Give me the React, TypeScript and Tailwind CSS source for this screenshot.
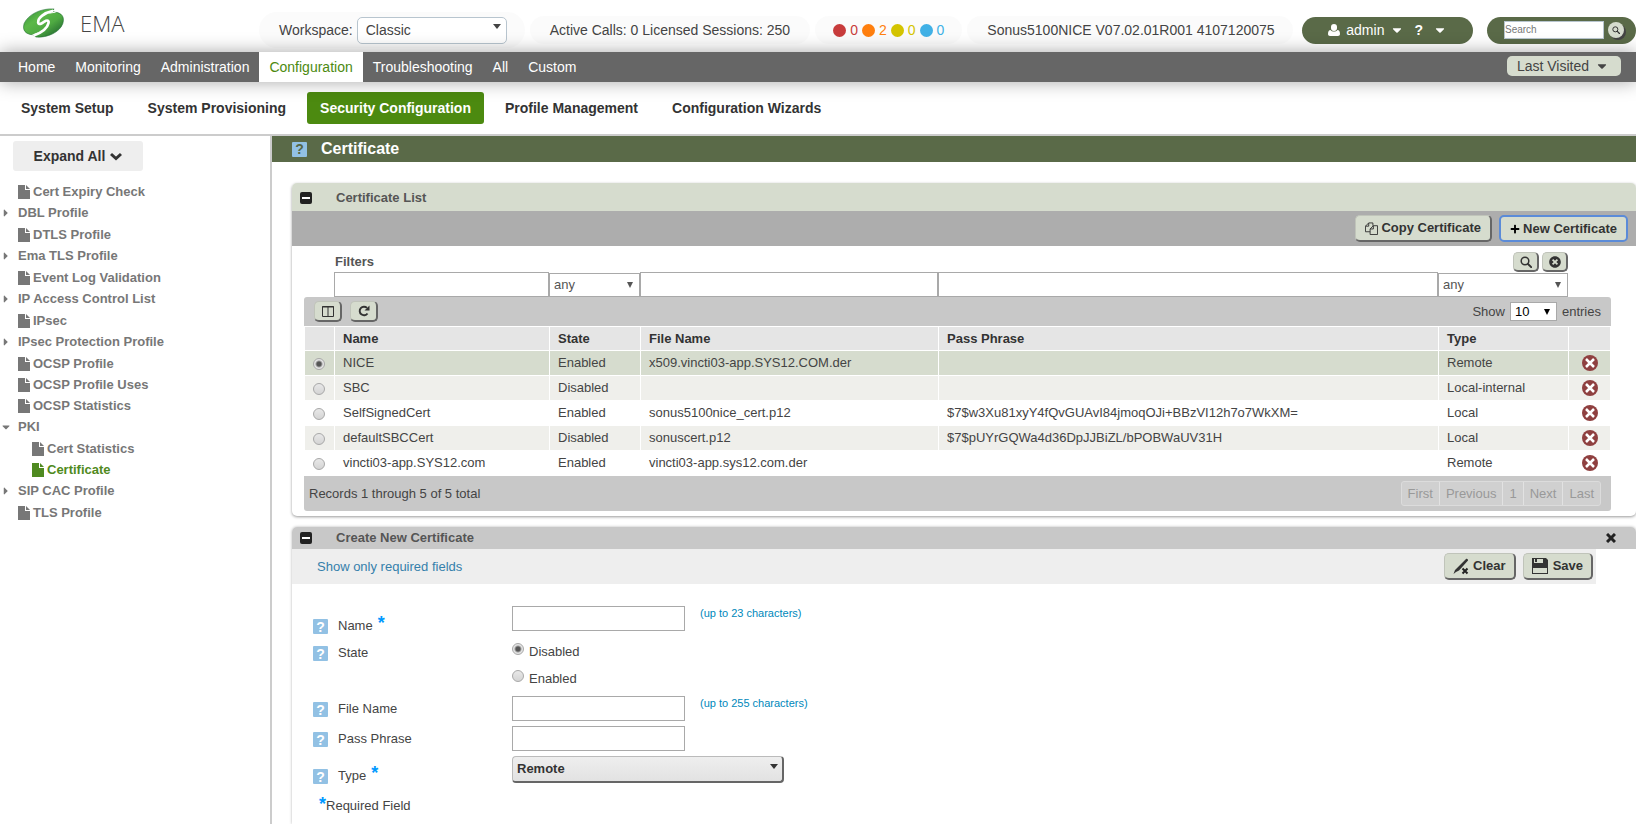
import type { ReactNode } from 'react'
import { FaCaretDown, FaCaretRight, FaPlus, FaTimesCircle } from 'react-icons/fa'

interface TreeNode {
  label: string
  folder?: 'open' | 'closed'
  child?: boolean
  active?: boolean
}

interface Certificate {
  name: string
  state: string
  fileName: string
  passPhrase: string
  type: string
}

const mainNav = ['Home', 'Monitoring', 'Administration', 'Configuration', 'Troubleshooting', 'All', 'Custom']

const subNav = [
  'System Setup',
  'System Provisioning',
  'Security Configuration',
  'Profile Management',
  'Configuration Wizards',
]

const alarms = [
  { label: 'Critical', count: 0, dot: 'bg-[#c83c3c]', text: 'text-[#c83c3c]' },
  { label: 'Major', count: 2, dot: 'bg-[#ff7f0e]', text: 'text-[#ff7f0e]' },
  { label: 'Minor', count: 0, dot: 'bg-[#d4c400]', text: 'text-[#d4c400]' },
  { label: 'Info', count: 0, dot: 'bg-[#41b1e6]', text: 'text-[#41b1e6]' },
]

const tree: TreeNode[] = [
  { label: 'Cert Expiry Check' },
  { label: 'DBL Profile', folder: 'closed' },
  { label: 'DTLS Profile' },
  { label: 'Ema TLS Profile', folder: 'closed' },
  { label: 'Event Log Validation' },
  { label: 'IP Access Control List', folder: 'closed' },
  { label: 'IPsec' },
  { label: 'IPsec Protection Profile', folder: 'closed' },
  { label: 'OCSP Profile' },
  { label: 'OCSP Profile Uses' },
  { label: 'OCSP Statistics' },
  { label: 'PKI', folder: 'open' },
  { label: 'Cert Statistics', child: true },
  { label: 'Certificate', child: true, active: true },
  { label: 'SIP CAC Profile', folder: 'closed' },
  { label: 'TLS Profile' },
]

const certificates: Certificate[] = [
  { name: 'NICE', state: 'Enabled', fileName: 'x509.vincti03-app.SYS12.COM.der', passPhrase: '', type: 'Remote' },
  { name: 'SBC', state: 'Disabled', fileName: '', passPhrase: '', type: 'Local-internal' },
  {
    name: 'SelfSignedCert',
    state: 'Enabled',
    fileName: 'sonus5100nice_cert.p12',
    passPhrase: '$7$w3Xu81xyY4fQvGUAvI84jmoqOJi+BBzVI12h7o7WkXM=',
    type: 'Local',
  },
  {
    name: 'defaultSBCCert',
    state: 'Disabled',
    fileName: 'sonuscert.p12',
    passPhrase: '$7$pUYrGQWa4d36DpJJBiZL/bPOBWaUV31H',
    type: 'Local',
  },
  {
    name: 'vincti03-app.SYS12.com',
    state: 'Enabled',
    fileName: 'vincti03-app.sys12.com.der',
    passPhrase: '',
    type: 'Remote',
  },
]

const raised =
  'flex items-center justify-center rounded-[5px] border-t border-l border-r-2 border-b-2 border-t-[#c0c4ba] border-l-[#c0c4ba] border-r-[#666] border-b-[#666] bg-[#d6dcce] text-[#333]'

const radio =
  'size-3 shrink-0 appearance-none rounded-full border border-[#a8a8a8] bg-linear-to-b from-[#e8e8e8] to-[#d4d4d4] checked:bg-[radial-gradient(circle,#555_0_2px,#e4e4e4_4px)]'

const textInput = 'border border-[#a9a9a9] bg-white px-2 outline-none'

function Logo() {
  return (
    <svg viewBox="-1 -1 43 31" className="h-[30px] w-[42px]" aria-hidden="true">
      <defs>
        <linearGradient id="swirl" x1="0" y1="0" x2="1" y2="1">
          <stop offset="0" stopColor="#2f8a3c" />
          <stop offset="0.350" stopColor="#5cb848" />
          <stop offset="0.600" stopColor="#4faa42" />
          <stop offset="1" stopColor="#14552a" />
        </linearGradient>
      </defs>
      <path
        d="M32 0C18-1 5 6 1 15c-2 7 1 11 10 12l2 2c12 1 25-5 28-14 2-7-1-11-9-12l-2-1Z"
        fill="url(#swirl)"
        stroke="#1d6b30"
        strokeWidth="0.600"
      />
      <path
        d="M31 2C22 4 15 9 15.500 14c.5 3 4 1 6.500-1 3-2 5-1 4 2-1 5-6 9-15 12.500"
        fill="none"
        stroke="#fff"
        strokeWidth="2.800"
      />
      <path d="M26 5 36 1.500l-3 2.500ZM16 24l-10 4 5-.5Z" fill="#fff" />
    </svg>
  )
}

function UserIcon() {
  return (
    <svg viewBox="0 0 12 12" className="size-3" fill="currentColor" aria-hidden="true">
      <rect x="3" y="0" width="6" height="7" rx="3" />
      <path d="M2.500 6C1 6 0 7.500 0 10c0 1.200.8 2 2 2h8c1.200 0 2-.8 2-2 0-2.500-1-4-2.500-4C8 8 4 8 2.500 6Z" />
    </svg>
  )
}

function FileIcon() {
  return (
    <svg viewBox="0 0 12 14" className="h-3.5 w-3" fill="currentColor" aria-hidden="true">
      <path d="M0 0h7v5h5v9H0Z" />
      <path d="M8 0v4h4Z" />
    </svg>
  )
}

function SearchIcon({ className }: { className: string }) {
  return (
    <svg viewBox="0 0 12 12" className={className} fill="none" stroke="currentColor" aria-hidden="true">
      <circle cx="5" cy="5" r="3.800" strokeWidth="1.500" />
      <path d="m8 8 3.200 3.200" strokeWidth="1.900" strokeLinecap="round" />
    </svg>
  )
}

function CopyIcon() {
  return (
    <svg viewBox="0 0 14 14" className="size-[13px]" fill="none" stroke="currentColor" aria-hidden="true">
      <path d="M5.500 10.500h-5V4.500l3.500-3.500h4.500v3M4 1v3.500H.5M5.500 7.500l3.500-3.500h4.500v9.500h-8ZM9 4v3.500H5.500" />
    </svg>
  )
}

function ColumnsIcon() {
  return (
    <svg viewBox="0 0 12 11" className="h-[11px] w-3" fill="none" stroke="currentColor" aria-hidden="true">
      <path d="M.5.5h11v10H.5ZM6 1v9" />
      <path d="M0 1h12" />
    </svg>
  )
}

function RefreshIcon() {
  return (
    <svg viewBox="0 0 12 12" className="size-3" fill="none" stroke="currentColor" aria-hidden="true">
      <path d="M9.500 8.500A4.300 4.300 0 1 1 9 2.900" strokeWidth="1.900" />
      <path d="M11.500.5v5h-5Z" fill="currentColor" stroke="none" />
    </svg>
  )
}

function PencilClearIcon() {
  return (
    <svg viewBox="0 0 17 17" className="size-[17px]" aria-hidden="true">
      <path d="M13 1c1-1 2.500.5 2 1.500L6 12.500l-3 1.500L.5 16l1.500-4Z" fill="#333" />
      <path d="m9.500 10.500 5 5m0-5-5 5" stroke="#d6dcce" strokeWidth="3.500" />
      <path d="m9.500 10.500 5 5m0-5-5 5" stroke="#222" strokeWidth="2" />
    </svg>
  )
}

function SaveIcon() {
  return (
    <svg viewBox="0 0 16 16" className="size-4" aria-hidden="true">
      <path d="M0 0h14l2 2v14H0Z" fill="#333" />
      <path d="M2 1h9v4H2ZM1 10h14v5H1Z" fill="#d6dcce" />
      <path d="M3 1h2v3H3Z" fill="#333" />
    </svg>
  )
}

function CollapseButton({ label }: { label: string }) {
  return (
    <button type="button" aria-label={label} className="flex size-3 items-center rounded-[2px] bg-[#222] px-0.5">
      <span className="h-0.5 w-full bg-white" />
    </button>
  )
}

function HelpIcon({ dark }: { dark?: boolean }) {
  return (
    <span
      className={`flex size-[15px] shrink-0 items-center justify-center rounded-[1px] bg-[#92c1e4] text-[14px] leading-none font-bold ${
        dark ? 'text-[#566745]' : 'text-white'
      }`}
    >
      ?
    </span>
  )
}

function Arrow({ className }: { className: string }) {
  return (
    <svg
      viewBox="0 0 8 8"
      className={`pointer-events-none absolute size-2 ${className}`}
      fill="currentColor"
      aria-hidden="true"
    >
      <path d="M0 1h8L4 6Z" />
    </svg>
  )
}

function TallArrow({ className }: { className: string }) {
  return (
    <svg
      viewBox="0 0 8 8"
      className={`pointer-events-none absolute size-2 ${className}`}
      fill="currentColor"
      aria-hidden="true"
    >
      <path d="M1 1h6L4 7Z" />
    </svg>
  )
}

function FilterSelect({ label, className }: { label: string; className: string }) {
  return (
    <div className={`relative shrink-0 text-[#555] ${className}`}>
      <select aria-label={label} className="h-6 w-full appearance-none border border-[#a9a9a9] bg-white px-1 text-[13px]">
        <option>any</option>
      </select>
      <TallArrow className="top-2 right-1.5" />
    </div>
  )
}

function Header() {
  const pill = 'flex h-7 items-center rounded-full bg-[#fafafa]/80'
  const darkPill = 'flex h-[27px] items-center rounded-full bg-[#5a6a48]'
  return (
    <header className="flex h-[52px] items-center gap-[5px] pt-2 text-[14px] whitespace-nowrap text-[#444]">
      <div className="flex w-[254px] shrink-0 items-center gap-4 self-start pl-[22px]">
        <Logo />
        <span className="font-['Open_Sans',sans-serif] text-[22px] leading-[30px] font-light text-[#444]">EMA</span>
      </div>
      <div className="flex h-9 items-center gap-1 rounded-full bg-[#fafafa]/80 pr-[18px] pl-5">
        <label htmlFor="workspace">Workspace:</label>
        <div className="relative">
          <select
            id="workspace"
            className="h-[27px] w-[150px] appearance-none rounded-[5px] border border-[#b8c5cf] bg-white px-2"
          >
            <option>Classic</option>
          </select>
          <Arrow className="top-1.5 right-1.5" />
        </div>
      </div>
      <div className={`${pill} px-5`}>Active Calls: 0 Licensed Sessions: 250</div>
      <div className={`${pill} gap-1 px-[18px]`}>
        {alarms.map((alarm) => (
          <span key={alarm.label} title={alarm.label} className={`flex items-center gap-1 ${alarm.text}`}>
            <span className={`size-[13px] rounded-full ${alarm.dot}`} />
            {alarm.count}
          </span>
        ))}
      </div>
      <div className={`${pill} pr-[18px] pl-5`}>Sonus5100NICE V07.02.01R001 4107120075</div>
      <div className="ml-auto flex gap-3.5 text-white">
        <div className={`${darkPill} gap-2.5 px-[26px]`}>
          <button type="button" className="flex items-center gap-1.5">
            <UserIcon />
            admin
            <FaCaretDown className="size-3.5" />
          </button>
          <button type="button" className="flex items-center gap-2.5 font-bold">
            ?
            <FaCaretDown className="size-3.5" />
          </button>
        </div>
        <form className={`${darkPill} gap-1 pr-3 pl-[17px]`}>
          <input
            type="text"
            aria-label="Search"
            placeholder="Search"
            className="h-[18px] w-[100px] border border-[#b8c5cf] bg-white text-[10px] text-[#444] placeholder:text-[#777]"
          />
          <button
            type="button"
            aria-label="Run search"
            className="flex size-4 items-center justify-center rounded-full bg-[#d6dcce] text-[#333] shadow-[2px_2px_0_#444]"
          >
            <SearchIcon className="size-2" />
          </button>
        </form>
      </div>
    </header>
  )
}

function MainNav() {
  return (
    <nav className="relative flex h-[30px] items-center bg-[#666] pr-[15px] pl-2 text-[14px] shadow-[0_0_18px_rgba(0,0,0,0.35)]">
      {mainNav.map((item) => (
        <a
          key={item}
          href="#"
          className={`px-2.5 leading-[30px] ${item === 'Configuration' ? 'bg-white text-[#4c8a10]' : 'text-white'}`}
        >
          {item}
        </a>
      ))}
      <button
        type="button"
        className="mb-0.5 ml-auto flex h-5 items-center gap-1.5 rounded-[5px] bg-[#d6dcce] pr-3 pl-2.5 text-[#444]"
      >
        Last Visited
        <FaCaretDown className="size-3.5" />
      </button>
    </nav>
  )
}

function Sidebar() {
  return (
    <aside className="w-[272px] shrink-0 border-r-2 border-[#ccc] pt-[5px]">
      <button
        type="button"
        className="ml-[13px] flex h-[30px] w-[130px] items-center justify-center gap-[5px] rounded-[3px] bg-[#eee] text-[14px] font-bold text-[#333]"
      >
        Expand All
        <svg viewBox="0 0 12 9" className="h-[9px] w-3" fill="none" stroke="currentColor" strokeWidth="3" aria-hidden="true">
          <path d="m1 2 5 4.500L11 2" />
        </svg>
      </button>
      <ul className="pt-[10px] text-[13px] font-bold text-[#777]">
        {tree.map((node) => (
          <li key={node.label} className={`flex items-center ${node.folder ? 'h-[22px]' : 'h-[21px]'}`}>
            <span className={node.child ? 'w-8' : 'w-[18px]'}>
              {node.folder === 'closed' && <FaCaretRight className="size-3" />}
              {node.folder === 'open' && <FaCaretDown className="size-3" />}
            </span>
            <a href="#" className={`flex items-center gap-[3px] ${node.active ? 'text-[#4f8a20]' : ''}`}>
              {!node.folder && <FileIcon />}
              {node.label}
            </a>
          </li>
        ))}
      </ul>
    </aside>
  )
}

function CertificateTable() {
  const head = 'h-[23px] bg-[#e5e5e5] px-2 text-left font-bold text-[#333]'
  return (
    <table className="w-full table-fixed border-separate border-spacing-px">
      <colgroup>
        <col className="w-[29px]" />
        <col className="w-[214px]" />
        <col className="w-[90px]" />
        <col className="w-[297px]" />
        <col />
        <col className="w-[129px]" />
        <col className="w-[41px]" />
      </colgroup>
      <thead>
        <tr>
          <th className={head} aria-label="Select" />
          <th className={head}>Name</th>
          <th className={head}>State</th>
          <th className={head}>File Name</th>
          <th className={head}>Pass Phrase</th>
          <th className={head}>Type</th>
          <th className={head} aria-label="Delete" />
        </tr>
      </thead>
      <tbody>
        {certificates.map((cert, i) => {
          const bg = i === 0 ? 'bg-[#d6dcce]' : i % 2 ? 'bg-[#efefeb]' : 'bg-white'
          return (
            <tr key={cert.name} className={`${bg} h-6`}>
              <td className="pl-2">
                <input
                  type="radio"
                  name="certificate"
                  aria-label={cert.name}
                  defaultChecked={i === 0}
                  className={`${radio} mt-0.5 block`}
                />
              </td>
              <td className="px-2">{cert.name}</td>
              <td className="px-2">{cert.state}</td>
              <td className="px-2">{cert.fileName}</td>
              <td className="px-2">{cert.passPhrase}</td>
              <td className="px-2">{cert.type}</td>
              <td>
                <button type="button" aria-label={`Delete ${cert.name}`} className="mx-auto block">
                  <svg viewBox="0 0 16 16" className="size-4" aria-hidden="true">
                    <circle cx="8" cy="8" r="8" fill="#8f4040" />
                    <path d="m4 4 8 8m0-8-8 8" stroke="#fff" strokeWidth="2.500" />
                  </svg>
                </button>
              </td>
            </tr>
          )
        })}
      </tbody>
    </table>
  )
}

function CertificateList() {
  return (
    <section className="rounded-[5px] bg-white pb-[5px] shadow-[0_1px_3px_rgba(0,0,0,0.4)]">
      <div className="flex h-7 items-center gap-6 rounded-t-[5px] bg-[#d6dcce] pt-0.5 pl-2">
        <CollapseButton label="Collapse Certificate List" />
        <h2 className="font-bold text-[#555]">Certificate List</h2>
      </div>
      <div className="flex h-[35px] items-center justify-end gap-[7px] bg-[#adadad] pr-2 font-bold">
        <button type="button" className={`${raised} h-[27px] gap-[3px] px-[9px]`}>
          <CopyIcon />
          Copy Certificate
        </button>
        <button
          type="button"
          className="flex h-[27px] items-center justify-center gap-[3px] rounded-[5px] border-2 border-[#5b8bd8] bg-[#d6dcce] px-[9px] text-[#333]"
        >
          <FaPlus className="size-[10px] text-black" />
          New Certificate
        </button>
      </div>
      <div className="mr-[25px] ml-3">
        <div className="flex h-[26px] items-end gap-[3px] pr-[43px] pl-[31px]">
          <h3 className="mr-auto leading-5 font-bold text-[#555]">Filters</h3>
          <button type="button" aria-label="Apply filters" className={`${raised} h-5 w-[26px]`}>
            <SearchIcon className="size-3" />
          </button>
          <button type="button" aria-label="Clear filters" className={`${raised} h-5 w-[26px]`}>
            <FaTimesCircle className="size-3" />
          </button>
        </div>
        <div className="flex h-[25px] items-end pr-[43px] pl-[30px]">
          <input type="text" aria-label="Filter by name" className={`${textInput} h-[25px] w-[215px] shrink-0`} />
          <FilterSelect label="Filter by state" className="w-[91px]" />
          <input type="text" aria-label="Filter by file name" className={`${textInput} h-[25px] w-[298px] shrink-0`} />
          <input type="text" aria-label="Filter by pass phrase" className={`${textInput} h-[25px] min-w-0 flex-1`} />
          <FilterSelect label="Filter by type" className="w-[130px]" />
        </div>
        <div className="flex h-[29px] items-center gap-2 rounded-t-[3px] bg-[#c8c8c8] px-[10px]">
          <button type="button" aria-label="Columns" className={`${raised} h-[21px] w-7`}>
            <ColumnsIcon />
          </button>
          <button type="button" aria-label="Refresh" className={`${raised} h-[21px] w-7`}>
            <RefreshIcon />
          </button>
          <label htmlFor="page-size" className="ml-auto flex items-center gap-[5px]">
            Show
            <span className="relative text-black">
              <select
                id="page-size"
                className="h-[19px] w-[47px] appearance-none border border-[#a9a9a9] bg-white px-1 text-[13px] leading-none"
              >
                <option>10</option>
              </select>
              <TallArrow className="top-1.5 right-1.5" />
            </span>
            entries
          </label>
        </div>
        <CertificateTable />
        <div className="flex h-[35px] items-center justify-between rounded-b-[3px] bg-[#c8c8c8] pr-[10px] pl-[5px]">
          <p>Records 1 through 5 of 5 total</p>
          <div className="flex divide-x divide-[#e2e2e2] rounded-[3px] border border-[#dcdcdc] bg-[#d0d0d0] text-[#999]">
            {['First', 'Previous', '1', 'Next', 'Last'].map((page) => (
              <button key={page} type="button" className="h-[23px] px-1.5">
                {page}
              </button>
            ))}
          </div>
        </div>
      </div>
    </section>
  )
}

interface FieldProps {
  label: string
  id: string
  required?: boolean
  hint?: string
  className: string
  children: ReactNode
}

function Field({ label, id, required, hint, className, children }: FieldProps) {
  return (
    <div className={`flex items-start ${className}`}>
      <div className={`flex w-[199px] shrink-0 gap-[10px] ${required ? 'pt-[13px]' : 'pt-1.5'}`}>
        <HelpIcon />
        <label htmlFor={id} className="leading-[13px]">
          {label}
          {required && (
            <span className="ml-[5px] inline-block align-top text-[18px] leading-[8px] font-bold text-[#0099ff]">*</span>
          )}
        </label>
      </div>
      {children}
      {hint && <span className="pl-[15px] text-[11px] leading-[15px] text-[#0088bb]">{hint}</span>}
    </div>
  )
}

function CreateCertificate() {
  return (
    <section className="flex-1 rounded-t-[5px] bg-white shadow-[0_0_3px_rgba(0,0,0,0.3)]">
      <div className="flex h-[22px] items-center gap-6 rounded-t-[5px] bg-[#c8c8c8] pr-5 pl-2">
        <CollapseButton label="Collapse Create New Certificate" />
        <h2 className="font-bold text-[#555]">Create New Certificate</h2>
        <button type="button" aria-label="Close" className="ml-auto">
          <svg viewBox="0 0 10 10" className="size-[10px]" stroke="#222" strokeWidth="3" aria-hidden="true">
            <path d="m1 1 8 8m0-8L1 9" />
          </svg>
        </button>
      </div>
      <div className="mr-10 flex h-[35px] items-center gap-[7px] bg-[#eee] pr-[3px] pl-[25px]">
        <a href="#" className="mr-auto text-[#3580ab]">
          Show only required fields
        </a>
        <button type="button" className={`${raised} h-[27px] gap-[3px] px-2 font-bold`}>
          <PencilClearIcon />
          Clear
        </button>
        <button type="button" className={`${raised} h-[27px] gap-[5px] px-2 font-bold`}>
          <SaveIcon />
          Save
        </button>
      </div>
      <form className="pt-[22px] pl-[21px]">
        <Field label="Name" id="name" required hint="(up to 23 characters)" className="h-[34px]">
          <input id="name" type="text" className={`${textInput} h-[25px] w-[173px]`} />
        </Field>
        <Field label="State" id="state-disabled" className="h-14">
          <div>
            {['Disabled', 'Enabled'].map((state) => (
              <label key={state} className="flex h-[27px] items-start gap-[5px] pt-[3px]">
                <input
                  id={`state-${state.toLowerCase()}`}
                  type="radio"
                  name="state"
                  defaultChecked={state === 'Disabled'}
                  className={radio}
                />
                <span className="leading-[17px]">{state}</span>
              </label>
            ))}
          </div>
        </Field>
        <Field label="File Name" id="file-name" hint="(up to 255 characters)" className="h-[30px]">
          <input id="file-name" type="text" className={`${textInput} h-[25px] w-[173px]`} />
        </Field>
        <Field label="Pass Phrase" id="pass-phrase" className="h-[30px]">
          <input id="pass-phrase" type="text" className={`${textInput} h-[25px] w-[173px]`} />
        </Field>
        <Field label="Type" id="type" required className="h-[34px]">
          <div className="relative text-[#333]">
            <select
              id="type"
              className="h-[27px] w-[272px] appearance-none rounded-[4px] border-t border-l border-r-2 border-b-2 border-t-[#bbb] border-l-[#bbb] border-r-[#666] border-b-[#666] bg-linear-to-b from-[#eee] to-[#e2e2e2] px-1 text-[13px] font-bold"
            >
              <option>Remote</option>
            </select>
            <Arrow className="top-[7px] right-1.5" />
          </div>
        </Field>
        <p className="flex h-[25px] items-end pl-1.5">
          <span className="h-[21px] text-[18px] leading-[21px] font-bold text-[#0099ff]">*</span>
          <span>Required Field</span>
        </p>
      </form>
    </section>
  )
}

export default function App() {
  return (
    <div className="flex min-h-screen flex-col overflow-x-hidden bg-white font-['Liberation_Sans',Arial,sans-serif] text-[13px] leading-[18px] text-[#444]">
      <Header />
      <MainNav />
      <nav className="flex h-[54px] items-center gap-2 border-b-2 border-[#ccc] pl-2 text-[14px] font-bold">
        {subNav.map((item) => (
          <a
            key={item}
            href="#"
            className={`rounded-[3px] px-[13px] leading-8 ${
              item === 'Security Configuration' ? 'bg-[#4c8a10] text-white' : 'text-[#333]'
            }`}
          >
            {item}
          </a>
        ))}
      </nav>
      <div className="flex flex-1">
        <Sidebar />
        <main className="flex min-w-0 flex-1 flex-col">
          <div className="flex h-[26px] items-center gap-3.5 bg-[#5a6a48] pl-5">
            <HelpIcon dark />
            <h1 className="text-[16px] font-bold text-white">Certificate</h1>
          </div>
          <div className="flex flex-1 flex-col gap-[11px] pt-[21px] pl-5">
            <CertificateList />
            <CreateCertificate />
          </div>
        </main>
      </div>
    </div>
  )
}
